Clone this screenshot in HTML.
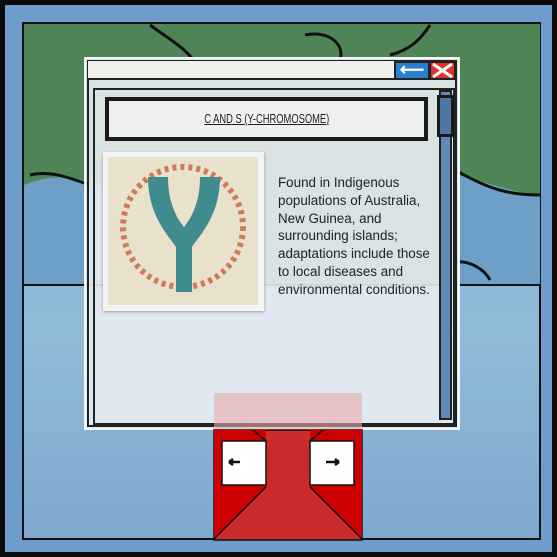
<!DOCTYPE html>
<html><head><style>
body{margin:0;width:557px;height:557px;overflow:hidden;position:relative;font-family:"Liberation Sans",sans-serif}
.a{position:absolute;box-sizing:border-box}
</style></head><body>
<div class="a" style="left:0;top:0;width:557px;height:557px;background:#0b0b0b"></div>
<div class="a" style="left:5px;top:5px;width:547px;height:547px;background:#6e9ccc"></div>
<div class="a" style="left:22px;top:22px;width:519px;height:518px;border:2px solid #111;background:linear-gradient(#7aa9d4,#8fbcd8 60%,#7ea8d0)"></div>
<svg class="a" style="left:0;top:0" width="557" height="557">
<path d="M24 24 H540 V285 H24 Z" fill="#4f8456"/>
<path d="M24 185 C60 170 90 180 110 190 L110 285 H24 Z" fill="#6e9fc6"/>
<path d="M440 170 C480 180 520 195 540 195 V285 H460 C450 270 440 260 440 260 Z" fill="#6e9fc6"/>
<path d="M24 285 H540" stroke="#111" stroke-width="2"/>
<path d="M150 25 C170 40 190 50 200 70 M305 35 C330 30 345 45 340 60 M390 55 C410 50 420 40 430 25 M30 175 C50 170 70 178 90 185 M455 170 C490 190 510 195 540 195 M455 262 C470 260 485 270 490 280" stroke="#111" stroke-width="3" fill="none"/>
</svg>
<div class="a" style="left:84px;top:57px;width:376px;height:373px;background:rgba(232,237,243,.9);border:2px solid #f4f6f8"></div>
<div class="a" style="left:87px;top:60px;width:370px;height:367px;border:2px solid #222"></div>
<div class="a" style="left:88px;top:61px;width:306px;height:19px;background:#eef0ec;border-bottom:2px solid #222"></div>
<div class="a" style="left:394px;top:61px;width:62px;height:19px;background:#222"></div>
<div class="a" style="left:396px;top:63px;width:32px;height:15px;background:#2a7fd0;color:#fff;font-size:17px;line-height:14px;text-align:center;font-weight:bold">⟵</div>
<svg class="a" style="left:431px;top:63px" width="23" height="15"><rect width="23" height="15" fill="#e03030"/><path d="M2 1L21 14M21 1L2 14" stroke="#fff" stroke-width="3"/></svg>
<div class="a" style="left:93px;top:88px;width:362px;height:337px;border:2px solid #222"></div>
<div class="a" style="left:105px;top:97px;width:323px;height:44px;border:4px solid #1a1a1a;background:#eef1ee;text-align:center;line-height:36px;color:#222"><span style="display:inline-block;font-size:13px;transform:scaleX(.72);text-decoration:underline;white-space:nowrap">C AND S (Y-CHROMOSOME)</span></div>
<div class="a" style="left:439px;top:90px;width:13px;height:330px;background:#6289b8;border:2px solid #222"></div>
<div class="a" style="left:437px;top:95px;width:17px;height:42px;background:#4e77a6;border:3px solid #1a1a1a"></div>
<div class="a" style="left:103px;top:152px;width:161px;height:159px;background:#f4f4f2;box-shadow:0 1px 3px #999"></div>
<svg class="a" style="left:108px;top:157px" width="150" height="148">
<rect width="150" height="148" fill="#e8e2cc"/>
<circle cx="75" cy="70" r="60" fill="none" stroke="#d27a55" stroke-width="6" stroke-dasharray="4 4"/>
<path d="M40 20 C40 60 62 80 68 90 V135 H84 V90 C90 80 112 60 112 20 H92 C92 50 80 65 76 70 C72 65 60 50 60 20 Z" fill="#3f8c8e"/>
</svg>
<div class="a" style="left:278px;top:174px;width:160px;font-size:13.4px;line-height:17.8px;color:#222">Found in Indigenous populations of Australia, New Guinea, and surrounding islands; adaptations include those to local diseases and environmental conditions.</div>
<div class="a" style="left:214px;top:393px;width:148px;height:37px;background:rgba(235,170,170,.6)"></div>
<svg class="a" style="left:213px;top:429px" width="151" height="112">
<rect x="1" y="1" width="148" height="110" fill="#cc2b2b" stroke="#111" stroke-width="1.5"/>
<path d="M1 1H53L53 58 L1 110Z" fill="#c00"/><path d="M149 1H97L97 58 L149 110Z" fill="#c00"/>
<path d="M1 110L53 58M149 110L97 58M40 1L53 12M110 1L97 12" stroke="#111" stroke-width="1.5"/>
<rect x="9" y="12" width="44" height="44" fill="#fff" stroke="#111" stroke-width="1.5"/>
<rect x="97" y="12" width="44" height="44" fill="#fff" stroke="#111" stroke-width="1.5"/>
<path d="M16 33H27M16 33l4-3M16 33l4 3M113 33H126M126 33l-4-3M126 33l-4 3" stroke="#111" stroke-width="2.5" fill="none"/>
</svg>
</body></html>
